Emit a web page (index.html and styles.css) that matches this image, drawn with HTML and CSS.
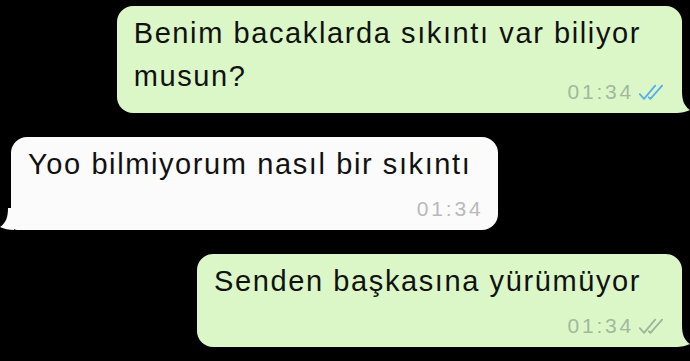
FILE: index.html
```html
<!DOCTYPE html>
<html>
<head>
    <title>Sohbet</title>
    <link rel="stylesheet" href="styles.css">
</head>
<body>
    <div class="chat">
        <div class="bubble out">
            <p class="text">Benim bacaklarda sıkıntı var biliyor</p>
            <div class="last-row">
                <p class="text">musun?</p>
                <div class="meta">
                    <span class="time">01:34</span>
                    <svg class="ticks read" viewBox="0 0 26 16" width="30" height="17">
                        <path d="M1.5 9.5l4 4.5L16 1.5M10 12.5l1.5 1.5L22.5 1.5"/>
                    </svg>
                </div>
            </div>
            <svg class="tail" viewBox="0 0 14 22" width="14" height="22"><path d="M0 0H6C6 9 8 15 14 19C10 21 5 22 0 22Z"/></svg>
        </div>

        <div class="bubble in">
            <p class="text">Yoo bilmiyorum nasıl bir sıkıntı</p>
            <div class="meta">
                <span class="time">01:34</span>
            </div>
            <svg class="tail" viewBox="0 0 14 22" width="14" height="22"><path d="M14 0H8C8 9 6 15 0 19C4 21 9 22 14 22Z"/></svg>
        </div>

        <div class="bubble out">
            <p class="text">Senden başkasına yürümüyor</p>
            <div class="meta">
                <span class="time">01:34</span>
                <svg class="ticks" viewBox="0 0 26 16" width="30" height="17">
                    <path d="M1.5 9.5l4 4.5L16 1.5M10 12.5l1.5 1.5L22.5 1.5"/>
                </svg>
            </div>
            <svg class="tail" viewBox="0 0 14 22" width="14" height="22"><path d="M0 0H6C6 9 8 15 14 19C10 21 5 22 0 22Z"/></svg>
        </div>
    </div>
</body>
</html>
```

FILE: styles.css
```css
body {
    margin: 0;
    background-color: #000;
    font-family: 'Liberation Sans', Arial, sans-serif;
}

.chat {
    display: flex;
    flex-direction: column;
    gap: 24px;
    padding: 6px 8px 0 11px;
}

.bubble {
    position: relative;
    box-sizing: border-box;
    max-width: 568px;
    padding: 6px 15px 9px 17px;
    border-radius: 16px;
}

.bubble.out {
    align-self: flex-end;
    background-color: #dbf7c8;
    border-bottom-right-radius: 6px;
}

.bubble.in {
    align-self: flex-start;
    background-color: #fbfbfb;
    border-bottom-left-radius: 6px;
}

.text {
    margin: 0;
    color: #111;
    font-size: 29px;
    line-height: 43px;
    letter-spacing: 1.6px;
}

.out .text {
    padding-right: 26px;
}

.in .text {
    padding-right: 12px;
}

.last-row {
    display: flex;
    justify-content: space-between;
    align-items: flex-end;
}

.last-row .text {
    margin-bottom: 6px;
}

.meta {
    display: flex;
    justify-content: flex-end;
    align-items: center;
    gap: 3px;
    margin-top: 11px;
    height: 24px;
}

.last-row .meta {
    margin-top: 0;
}

.time {
    font-size: 21px;
    line-height: 24px;
    letter-spacing: 2.8px;
}

.out .time {
    color: #a2b89e;
}

.in .time {
    color: #b9b9b9;
}

.ticks {
    fill: none;
    stroke: #9fb39b;
    stroke-width: 1.7;
    stroke-linecap: round;
    stroke-linejoin: round;
}

.ticks.read {
    stroke: #56aeea;
}

.tail {
    position: absolute;
    bottom: 0;
}

.out .tail {
    right: -8px;
    fill: #dbf7c8;
}

.in .tail {
    left: -11px;
    fill: #fbfbfb;
}
```
